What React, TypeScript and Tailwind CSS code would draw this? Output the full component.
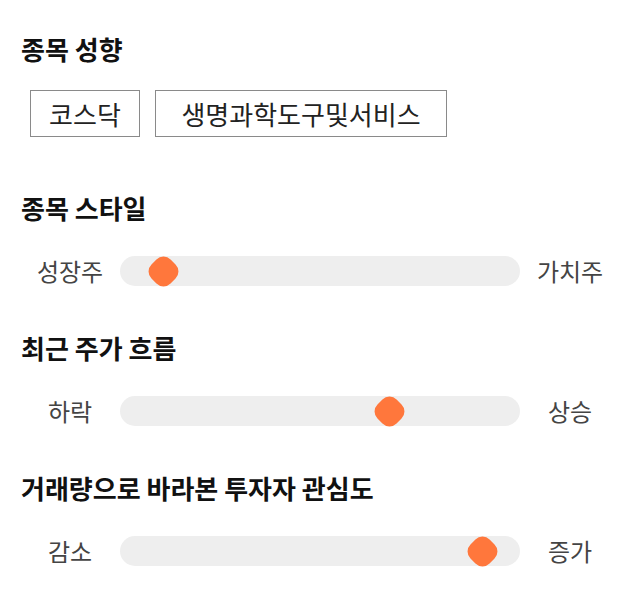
import React from "react";

interface SliderRowProps {
  left: string;
  right: string;
  value: number; // 0..1
}

const SliderRow: React.FC<SliderRowProps> = ({ left, right, value }) => {
  // thumb is ~29px wide, track is 400px wide
  const center = 14 + value * (400 - 29);
  return (
    <div className="flex items-center h-[30px] pl-[20px]">
      <div className="w-[100px] text-center text-[24px] leading-[30px] text-[#444]">{left}</div>
      <div className="relative w-[400px] h-[30px] rounded-full bg-[#eeeeee]">
        <div
          className="absolute top-[1.5px] w-[27px] h-[27px] rounded-[10px] bg-[#ff773c] rotate-45"
          style={{ left: center - 13.5 }}
        />
      </div>
      <div className="w-[100px] text-center text-[24px] leading-[30px] text-[#444]">{right}</div>
    </div>
  );
};

const Heading: React.FC<{ text: string; className?: string }> = ({ text, className }) => (
  <h2 className={"pl-[21px] text-[26px] leading-[32px] font-bold text-[#111] " + (className ?? "")}>
    {text}
  </h2>
);

export default function App() {
  return (
    <div
      className="w-[640px] h-[606px] bg-white pt-[33px]"
      style={{ fontFamily: '"Noto Sans CJK KR", "Noto Sans", sans-serif' }}
    >
      {/* 종목 성향 */}
      <Heading text="종목 성향" />
      <div className="flex gap-[15px] pl-[30px] mt-[25px]">
        <div className="w-[110px] h-[47px] border border-[#8a8a8a] flex items-center justify-center text-[26px] text-[#222]">
          코스닥
        </div>
        <div className="w-[292px] h-[47px] border border-[#8a8a8a] flex items-center justify-center text-[26px] text-[#222]">
          생명과학도구및서비스
        </div>
      </div>

      <Heading text="종목 스타일" className="mt-[55px]" />
      <div className="mt-[32px]">
        <SliderRow left="성장주" right="가치주" value={0.08} />
      </div>

      <Heading text="최근 주가 흐름" className="mt-[46px]" />
      <div className="mt-[32px]">
        <SliderRow left="하락" right="상승" value={0.69} />
      </div>

      <Heading text="거래량으로 바라본 투자자 관심도" className="mt-[46px]" />
      <div className="mt-[32px]">
        <SliderRow left="감소" right="증가" value={0.94} />
      </div>
    </div>
  );
}
